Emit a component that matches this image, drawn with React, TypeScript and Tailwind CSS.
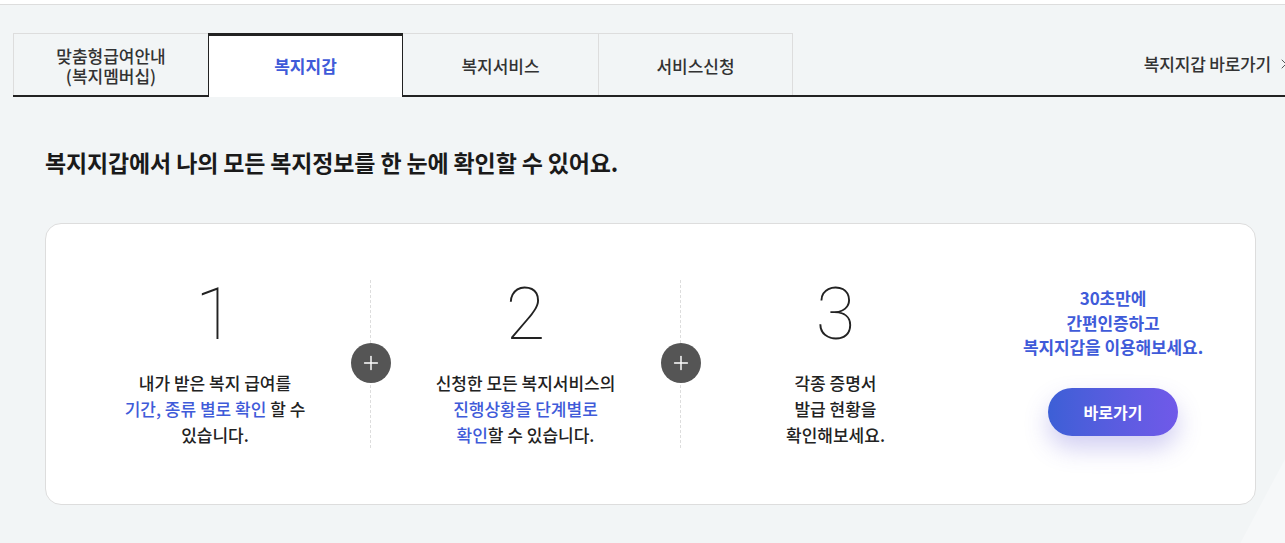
import { ChevronRight, Plus } from 'lucide-react'

const font = { fontFamily: '"Noto Sans CJK KR", "Noto Sans", sans-serif' }
const numFont = { fontFamily: 'Roboto, "Noto Sans", sans-serif' }

const tabs = [
  { id: 1, label: ['맞춤형급여안내', '(복지멤버십)'] },
  { id: 2, label: ['복지지갑'] },
  { id: 3, label: ['복지서비스'] },
  { id: 4, label: ['서비스신청'] },
]

function PlusBadge() {
  return (
    <div className="absolute left-[-20px] top-[63px] z-10 flex h-10 w-10 items-center justify-center rounded-full bg-[#555555]">
      <Plus className="h-[22px] w-[22px] text-white" strokeWidth={1.6} />
    </div>
  )
}

function StepNumber({ n }: { n: number }) {
  return (
    <div className="text-[72px] font-thin leading-[69px] text-[#222]" style={numFont}>
      {n}
    </div>
  )
}

export default function App() {
  const activeId = 2

  return (
    <div className="relative min-h-[543px] w-full overflow-hidden bg-[#f2f5f6] text-[#222]" style={font}>
      {/* 배경 장식 */}
      <div className="pointer-events-none absolute left-[1230px] top-[400px] h-[400px] w-[300px] rotate-[28deg] rounded-[60px] bg-[#f6f8f9]" />

      <div className="h-[5px] border-b border-[#dddddd] bg-white" />

      <div className="relative w-[1300px]">
        {/* 탭 */}
        <div className="mt-[28px] ml-[13px] flex items-end border-b-2 border-[#222222]">
          {tabs.map((tab, i) => {
            const active = tab.id === activeId
            return (
              <div
                key={tab.id}
                className={`flex w-[195px] flex-col items-center justify-center text-center text-[17px] leading-[20px] ${
                  active
                    ? '-mb-[2px] h-[64px] border-x border-t-[3px] border-[#222222] bg-white pb-[2px] font-bold text-[#3f5bd9]'
                    : `h-[62px] border-t border-l border-[#dddddd] pt-[3px] font-medium text-[#333333] ${i === tabs.length - 1 ? 'border-r' : ''}`
                } ${i === activeId ? 'border-l-0' : ''}`}
              >
                {tab.label.map(l => <span key={l}>{l}</span>)}
              </div>
            )
          })}
          <div className="ml-auto flex h-[62px] items-center pr-[8px] text-[17px] font-medium tracking-[-0.2px] text-[#333333]">
            복지지갑 바로가기
            <ChevronRight className="ml-[5px] h-[16px] w-[16px] text-[#555]" strokeWidth={1.5} />
          </div>
        </div>
      </div>

      {/* 타이틀 */}
      <h2 className="relative mt-[50px] ml-[45px] text-[23px] font-bold leading-[30px] tracking-[-0.15px] text-[#1a1a1a]">
        복지지갑에서 나의 모든 복지정보를 한 눈에 확인할 수 있어요.
      </h2>

      {/* 카드 */}
      <div className="relative mt-[46px] ml-[45px] w-[1211px] rounded-[16px] border border-[#dddddd] bg-white pl-[14px] pr-[19px] pt-[56px] pb-[56px]">
        <div className="flex">
          <div className="flex h-[168px] w-[310px] flex-col items-center">
            <StepNumber n={1} />
            <p className="mt-auto text-center text-[17px] font-medium leading-[26px]">
              내가 받은 복지 급여를<br />
              <span className="text-[#3f5bd9]">기간, 종류 별로 확인</span> 할 수<br />
              있습니다.
            </p>
          </div>

          <div className="relative flex h-[168px] w-[310px] flex-col items-center border-l border-dashed border-[#dddddd]">
            <PlusBadge />
            <StepNumber n={2} />
            <p className="mt-auto text-center text-[17px] font-medium leading-[26px]">
              신청한 모든 복지서비스의<br />
              <span className="text-[#3f5bd9]">진행상황을 단계별로</span><br />
              <span className="text-[#3f5bd9]">확인</span>할 수 있습니다.
            </p>
          </div>

          <div className="relative flex h-[168px] w-[310px] flex-col items-center border-l border-dashed border-[#dddddd]">
            <PlusBadge />
            <StepNumber n={3} />
            <p className="mt-auto text-center text-[17px] font-medium leading-[26px]">
              각종 증명서<br />
              발급 현황을<br />
              확인해보세요.
            </p>
          </div>

          <div className="flex flex-1 flex-col items-center pt-[6px]">
            <p className="text-center text-[17px] font-bold leading-[24.5px] tracking-[-0.1px] text-[#3f5bd9]">
              30초만에<br />
              간편인증하고<br />
              복지지갑을 이용해보세요.
            </p>
            <button className="mt-[28px] h-[48px] w-[130px] rounded-full bg-gradient-to-r from-[#3c5fd6] to-[#7059e9] text-[16px] font-bold text-white shadow-[0_12px_24px_rgba(90,80,210,0.28)]">
              바로가기
            </button>
          </div>
        </div>
      </div>
    </div>
  )
}
